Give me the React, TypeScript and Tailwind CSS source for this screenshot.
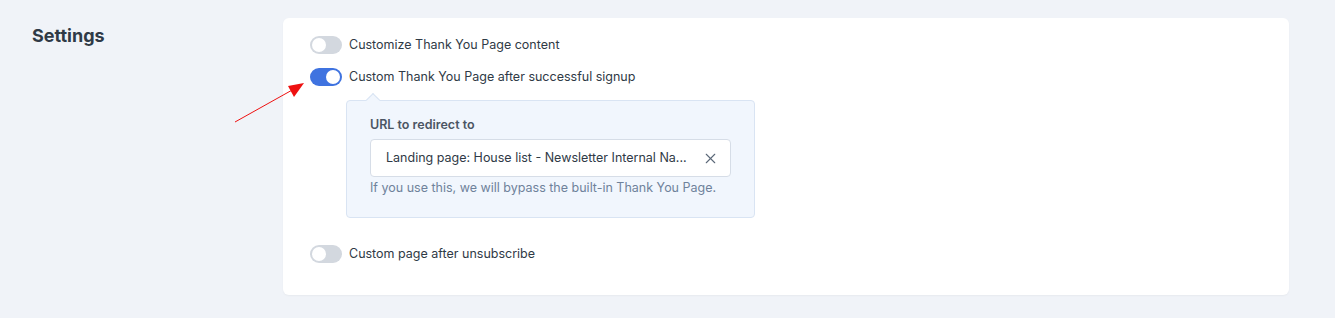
import { X } from 'lucide-react';
import clsx from 'clsx';

const font = { fontFamily: 'Inter, "Noto Sans", sans-serif' };

function Toggle({ on }: { on?: boolean }) {
    return (
        <span
            className={clsx(
                'relative inline-flex h-[18px] w-[32px] shrink-0 items-center rounded-full',
                on ? 'bg-[#3f73e0]' : 'bg-[#d3d8df]',
            )}
        >
            <span
                className={clsx(
                    'h-[14px] w-[14px] rounded-full bg-white',
                    on ? 'ml-[16px]' : 'ml-[2px]',
                )}
            />
        </span>
    );
}

function Row({ on, label }: { on?: boolean; label: string }) {
    return (
        <div className="flex h-[18px] items-center gap-[7px]">
            <Toggle on={on} />
            <span className="text-[12.5px] leading-[18px] text-[#2f3a46]">{label}</span>
        </div>
    );
}

export default function App() {
    return (
        <div className="relative flex h-[318px] w-[1335px] bg-[#f0f3f8] pt-[18px]" style={font}>
            <div className="w-[283px] shrink-0 pl-[32px] pt-[4px]">
                <h2 className="text-[18px] font-bold text-[#2f3a46]">Settings</h2>
            </div>
            <div className="h-[277px] w-[1006px] rounded-[6px] bg-white pl-[27px] pt-[18px] shadow-[0_1px_2px_rgba(0,0,0,0.04)]">
                <Row label="Customize Thank You Page content" />
                <div className="mt-[14px]">
                    <Row on label="Custom Thank You Page after successful signup" />
                </div>
                <div className="relative ml-[36px] mt-[14px] w-[409px] rounded-[4px] border border-[#d9e4f3] bg-[#f1f6fd] px-[23px] pb-[20px] pt-[15px]">
                    <span className="absolute -top-[6px] left-[21px] h-[10px] w-[10px] rotate-45 border-l border-t border-[#d9e4f3] bg-[#f1f6fd]" />
                    <div className="text-[12.5px] font-semibold leading-[18px] text-[#4b5563]">URL to redirect to</div>
                    <div className="mt-[5px] flex h-[38px] w-[361px] items-center justify-between rounded-[4px] border border-[#d6dde7] bg-white pl-[15px] pr-[11px]">
                        <span className="text-[12.5px] leading-[18px] text-[#2f3a46]">
                            Landing page: House list - Newsletter Internal Na...
                        </span>
                        <X className="h-[17px] w-[17px] text-[#5b6878]" strokeWidth={1.5} />
                    </div>
                    <div className="mt-[2px] text-[12.5px] leading-[18px] text-[#6f829b]">
                        If you use this, we will bypass the built-in Thank You Page.
                    </div>
                </div>
                <div className="mt-[27px]">
                    <Row label="Custom page after unsubscribe" />
                </div>
            </div>
            <svg className="absolute left-[230px] top-[78px]" width="80" height="50" viewBox="0 0 80 50">
                <line x1="5" y1="44" x2="64" y2="11" stroke="#ee1111" strokeWidth="1" />
                <polygon points="74,5 58,8 64,19" fill="#ee1111" />
            </svg>
        </div>
    );
}
